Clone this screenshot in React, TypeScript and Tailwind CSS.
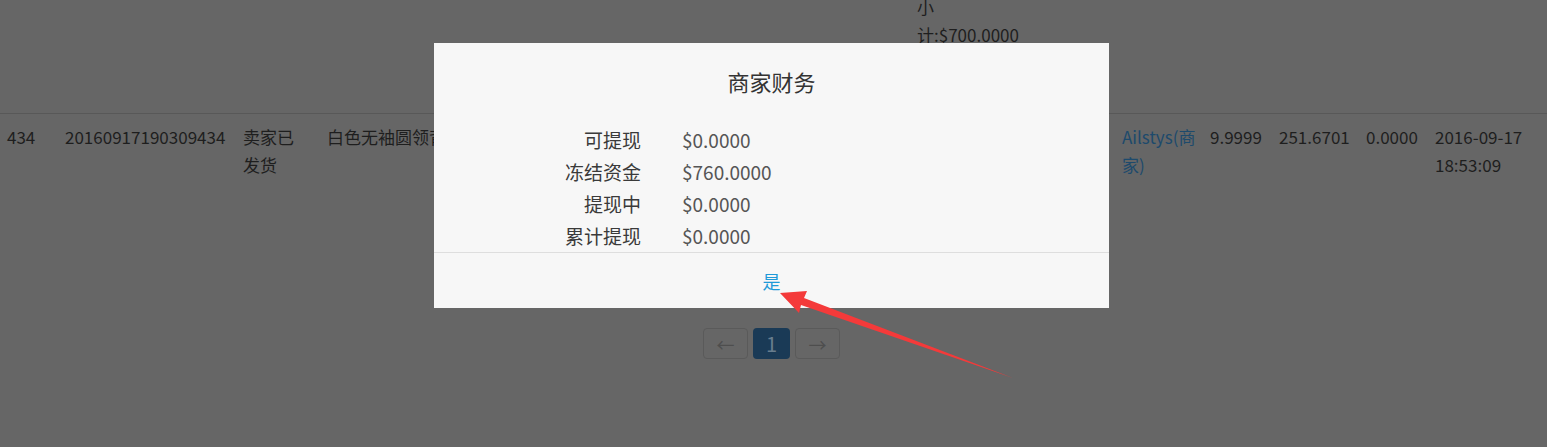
import React from "react";

const financeRows = [
  { label: "可提现", value: "$0.0000" },
  { label: "冻结资金", value: "$760.0000" },
  { label: "提现中", value: "$0.0000" },
  { label: "累计提现", value: "$0.0000" },
];

export default function App() {
  return (
    <div className="relative w-[1547px] h-[447px] overflow-hidden bg-[#666666] font-['Noto_Sans_CJK_SC','Noto_Sans',sans-serif] text-[17px] leading-[28px] text-[#1e1e1e]">
      {/* previous table row, cut at the top */}
      <div className="h-[114px] overflow-hidden border-b border-[#585858]">
        <div className="-mt-[7px] pl-[917px]">
          小<br />
          计:$700.0000
        </div>
      </div>

      {/* table row */}
      <div className="flex pt-[9px]">
        <div className="w-[65px] pl-[7px]">434</div>
        <div className="w-[178px]">20160917190309434</div>
        <div className="w-[84px]">
          卖家已<br />
          发货
        </div>
        <div className="w-[795px] whitespace-nowrap overflow-hidden">白色无袖圆领背心</div>
        <div className="w-[88px] text-[#1d4a6c]">
          Ailstys(商<br />
          家)
        </div>
        <div className="w-[69px]">9.9999</div>
        <div className="w-[87px]">251.6701</div>
        <div className="w-[69px]">0.0000</div>
        <div className="w-[112px]">
          2016-09-17<br />
          18:53:09
        </div>
      </div>

      {/* pagination */}
      <div className="mt-[149px] flex justify-center gap-[5px] pr-[4px]">
        <div className="flex h-[31px] w-[45px] items-center justify-center rounded-[4px] border border-[#5a5a5a] text-[18px] text-[#4e4e4e]">
          ←
        </div>
        <div className="flex h-[31px] w-[37px] items-center justify-center rounded-[4px] bg-[#1a3a56] text-[20px] text-[#687d8e]">
          1
        </div>
        <div className="flex h-[31px] w-[45px] items-center justify-center rounded-[4px] border border-[#5a5a5a] text-[18px] text-[#4e4e4e]">
          →
        </div>
      </div>

      {/* modal */}
      <div className="absolute left-[434px] top-[43px] flex h-[265px] w-[675px] flex-col bg-[#f7f7f7]">
        <div className="pt-[23px] text-center text-[22px] leading-[30px] text-[#333333]">商家财务</div>
        <div className="mt-[28px]">
          {financeRows.map((row) => (
            <div key={row.label} className="flex text-[19px] leading-[32px]">
              <span className="w-[207px] text-right text-[#3a3a3a]">{row.label}</span>
              <span className="pl-[41px] text-[#555555]">{row.value}</span>
            </div>
          ))}
        </div>
        <div className="flex flex-1 items-center justify-center border-t border-[#dedede] text-[18px] text-[#1f9ad8]">
          是
        </div>
      </div>

      {/* annotation arrow */}
      <svg className="pointer-events-none absolute left-0 top-0" width="1547" height="447" viewBox="0 0 1547 447">
        <polygon
          points="780,293 807,291 804,298 1013,378 801,305 799,313"
          fill="#f43a3a"
        />
      </svg>
    </div>
  );
}
